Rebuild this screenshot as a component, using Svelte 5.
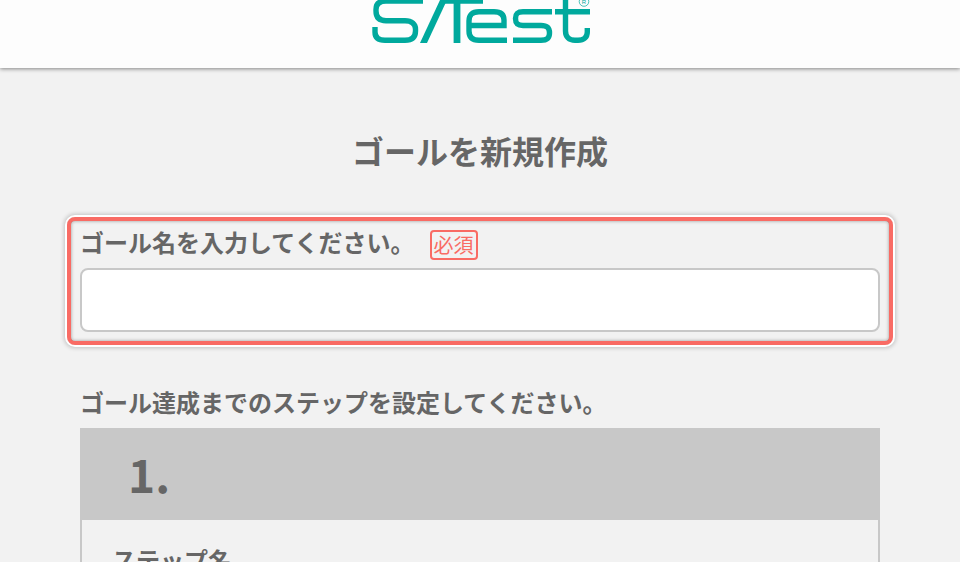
<script>
  const stepLabel = 'ステップ名';
</script>

<div class="page">
  <header class="top">
    <svg class="logo" viewBox="368 0 224 46" width="224" height="46" role="img" aria-label="SiTest">
      <g fill="none" stroke="#00a99d" stroke-width="5.400">
        <path d="M423 1H386C379 1 376 4 376 9.500V11C376 17 379 20.700 386 20.700H405C412 20.700 415.500 24 415.500 29V31C415.500 37 412 40.300 405 40.300H385C378 40.300 375 37 375 32V27"/>
        <path d="M440 1H483"/>
        <path d="M507 40.300H479C472 40.300 469 37 469 31V21C469 15 472 11.700 479 11.700H494C501 11.700 504 15 504 20V25.500H469"/>
        <path d="M552 11.700H523C517.500 11.700 515.500 14 515.500 18.500C515.500 23 517.500 25.500 523 25.500H541C547 25.500 549.500 28 549.500 33C549.500 38 547 40.300 541 40.300H513"/>
        <path d="M555 11.700H590M587.300 28V32C587.300 37 584 40.300 578 40.300H575C569 40.300 565.500 37 565.500 31V-2"/>
        <path d="M457 0V43" stroke-width="6.800"/>
      </g>
      <polygon points="420,43 427,43 447,0 440,0" fill="#00a99d"/>
      <circle cx="584" cy="1.500" r="4.800" fill="none" stroke="#00a99d" stroke-width=".7"/>
      <text x="584" y="4.300" text-anchor="middle" font-size="6" fill="#00a99d" font-family="Liberation Sans">R</text>
    </svg>
  </header>
  <main class="content">
    <h1>ゴールを新規作成</h1>
    <div class="focus">
      <div class="field">
        <div class="label"><span>ゴール名を入力してください。</span><em>必須</em></div>
        <input type="text" aria-label="ゴール名" />
      </div>
    </div>
    <p class="steps-title">ゴール達成までのステップを設定してください。</p>
    <section class="step">
      <div class="step-head">1.</div>
      <div class="step-body"><div class="step-label">{stepLabel}</div></div>
    </section>
  </main>
</div>

<style>
  :global(body) { margin: 0; background: #f2f2f2; overflow: hidden; }
  .page { height: 562px; overflow: hidden; font-family: "Noto Sans CJK JP", "Noto Sans", sans-serif; color: #666; }
  .top { height: 68px; background: #fdfdfd; box-shadow: 0 1px 4px rgba(0,0,0,.45); display: flex; justify-content: center; }
  .logo { display: block; }
  .content { padding: 0 80px; }
  h1 { margin: 0; padding-top: 62px; font-size: 32px; line-height: 40px; font-weight: 700; text-align: center; }
  .focus { margin: 47px -13px 0; border: 4px solid #f96b64; border-radius: 8px; box-shadow: 0 0 0 2px #fff, 0 0 4px 3px rgba(0,0,0,.2); }
  .field { padding: 9px; border-radius: 3px; box-shadow: inset 0 0 3px 1px rgba(0,0,0,.22); }
  .label { display: flex; align-items: center; height: 30px; margin-bottom: 8px; font-size: 24px; font-weight: 700; }
  .label span { padding-bottom: 8px; }
  .label em { margin-left: 15px; font-style: normal; font-weight: 400; font-size: 20px; line-height: 26px; padding: 0 2px; color: #f96b64; border: 2px solid #f96b64; border-radius: 4px; }
  input { display: block; box-sizing: border-box; width: 100%; height: 64px; border: 2px solid #c8c8c8; border-radius: 8px; background: #fff; }
  .steps-title { margin: 39px 0 8px; font-size: 24px; line-height: 36px; font-weight: 700; }
  .step-head { height: 92px; background: #c8c8c8; padding-left: 48px; font-size: 46px; line-height: 90px; font-weight: 700; }
  .step-body { border: 2px solid #c8c8c8; border-top: 0; height: 200px; padding: 22px 30px; }
  .step-label { font-size: 24px; font-weight: 700; line-height: 36px; }
</style>
